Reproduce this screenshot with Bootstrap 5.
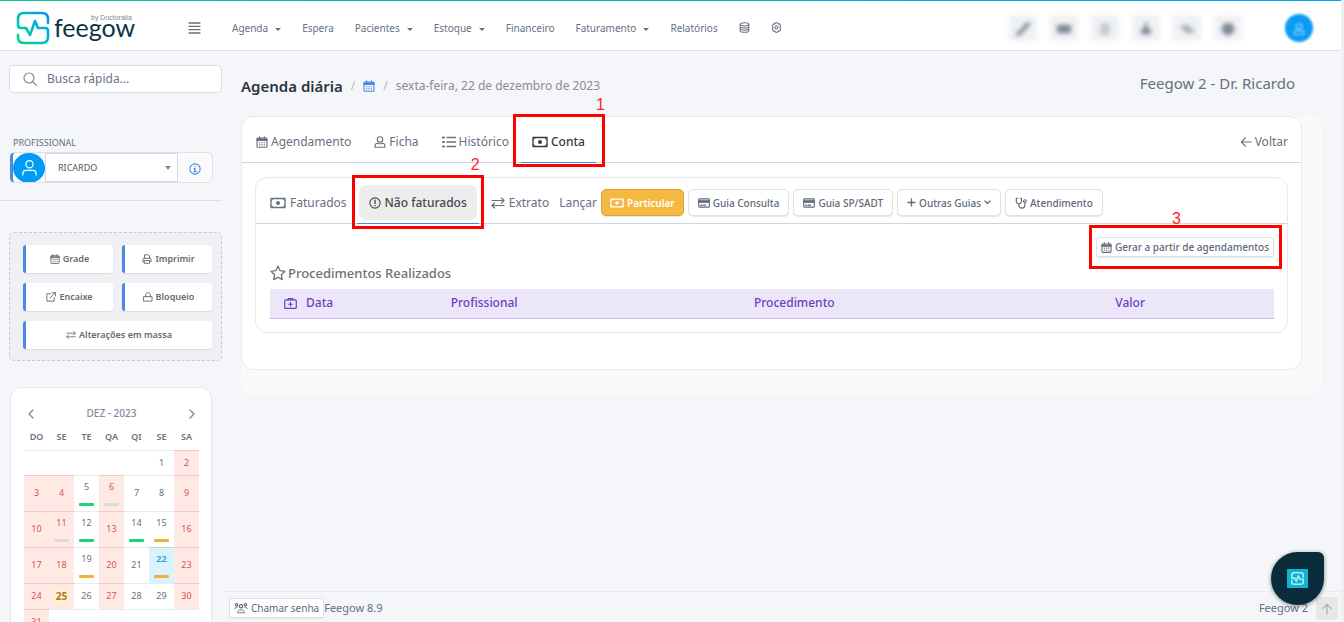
<!DOCTYPE html>
<html lang="pt-BR">
<head>
<meta charset="utf-8">
<meta name="viewport" content="width=device-width, initial-scale=1">
<title>Feegow - Agenda diária</title>
<link href="https://cdn.jsdelivr.net/npm/bootstrap@5.3.0/dist/css/bootstrap.min.css" rel="stylesheet">
<style>
:root{--ink:#66707f;--line:#e7e9ee;--blue:#4a89e8}
body{font-family:"Noto Sans","Liberation Sans",sans-serif;font-size:13px;line-height:20px;color:var(--ink);background:#f5f6f9;border-right:3px solid #f0f0f1}
a{color:inherit;text-decoration:none}
svg{flex:none;fill:none;stroke:currentColor;stroke-width:1.3;stroke-linecap:round;stroke-linejoin:round}
.ic{width:12px;height:12px}
.ic-sm{width:11px;height:11px}
.ic-md{width:14px;height:14px}
.ic-wide{width:16px;height:12px}
.shell{height:100vh;overflow:hidden}
.topbar{height:51px;background:#fff;border-bottom:1px solid #dde2ea;flex:none;position:relative;padding-top:5px}
.topbar::before{content:"";position:absolute;inset:0 0 auto;height:1px;background:linear-gradient(90deg,#00c4a0,#00a0f5)}
.logo{width:120px;height:34px;overflow:visible}
.logo text{stroke:none;fill:#0b3443}
.logo .by{fill:#7d8790}
.brand-zone{width:222px;padding:0 21px 0 16px}
.burger{border:0;background:none;padding:0;line-height:1;color:var(--ink)}
.mainmenu{font-size:10px;gap:21px;padding-left:10px}
.mainmenu .dropdown-toggle::after{margin-left:7px;vertical-align:1px;border-width:3px 3px 0}
.tools{gap:13px;padding-right:28px}
.tool{width:28px;height:26px;border:0;padding:0;background:#eff1f4;color:#7d8b95;filter:blur(2px)}
.tool svg{width:14px;height:14px;stroke-width:2.5}
.avatar-top{width:28px;height:28px;border:0;padding:0;background:#0a9cf5;color:#9ad6fc;filter:blur(1px);margin-left:30px}
.side{width:222px;flex:none;padding:14px 0 0 9px}
.search{height:28px;border:1px solid #d9dce1;border-radius:5px;background:#fff;padding:0 13px;gap:8px;color:#8c8c8c}
.search input{border:0;outline:0;min-width:0;background:none;font-size:12px;color:#66758a}
.search input::placeholder{color:#66758a}
.lbl{font-size:9px;line-height:14px;margin:43px 0 2px 4px}
.prof{height:31px;width:203px;margin-left:1px;border:1px solid #dfe1e5;border-left:3px solid var(--blue);border-radius:5px;background:#fafafa}
.prof .face{width:32px;height:30px;background:#009bf5;color:#fff;border-radius:50%}
.prof select{font-size:9px;color:#555;border:1px solid #d0d9ea;border-radius:0;height:29px;padding:0 20px 0 12px;background:#fff url("data:image/svg+xml,%3Csvg xmlns='http://www.w3.org/2000/svg' viewBox='0 0 6 5'%3E%3Cpath d='M0 1h6L3 5z' fill='%23888'/%3E%3C/svg%3E") no-repeat right 6px center/6px 5px;appearance:none;min-width:0}
.prof button{width:34px;border:0;background:none;color:var(--blue);padding:0}
.rule{margin:17px 0 31px -9px;border-top:1px solid #dddfe2}
.actions{border:1px dashed #c9cbce;border-radius:5px;background:#eef0f4;padding:12px 9px 11px 13px;display:grid;grid-template-columns:1fr 1fr;gap:10px 9px}
.act{height:28px;border:0;border-left:3px solid var(--blue);border-radius:3px;background:#fff;box-shadow:0 1px 1px #d8dade;font-size:9px;font-weight:600;color:#6a6a6a;gap:3px;padding:0}
.act svg{width:10px;height:10px}
.act-all{grid-column:1/-1}
.cal{width:202px;border:1px solid #e6e8ec;border-radius:11px;background:#fff;margin:26px 0 0 1px;padding:14px 12px 14px 13px}
.cal-h{height:22px;font-size:10px;color:#7d8ca3;padding:0 3px;font-weight:500}
.cal-h button{border:0;background:none;color:inherit;padding:0;line-height:1}
.cal table{width:175px;table-layout:fixed;font-size:9px;line-height:12px;text-align:center;border-collapse:collapse}
.cal th{height:26px;font-weight:600;font-size:9px;padding:0}
.cal td{padding:0;border-top:1px solid #e9ebee;vertical-align:middle}
.cal .h1r td{height:25px}.cal .h2r td{height:36px}.cal .h3r td{height:26px}
.cal .off{background:#ffe9e4;color:#d3544f;border-top-color:#f9c6c6}
.cal .now{background:#d8f2fe;color:#2b9cc6;border-top-color:#aee0b4}
.cal .now.has{font-weight:600}
.cal i{display:block;width:15px;height:3px;border-radius:1px;margin:10px auto 0}
.cal .has{vertical-align:bottom;padding-bottom:5px}
.g{background:#1bd474}.o{background:#efb03c}.n{background:#dbdbdb}
.xmas{display:inline-block;background:#fdf3cd;border-radius:50%;color:#a57b2e;font-weight:700;font-size:10px;line-height:15px;padding:0 3px}
.crumbs{font-size:12px;color:#8a8c90;gap:8px;padding-top:3px}
.crumbs h1{font-size:15px;line-height:20px;font-weight:600;color:#2c3440;margin:0}
.crumbs .sep{color:#b4b6ba}
.crumbs a{color:var(--blue)}
.head{padding:22px 46px 20px 19px}
.unit{font-size:15px;line-height:16px;padding-bottom:4px}
.backdrop-zone{margin:0 19px;padding:0 20px 24px 0;background:#fafafa;border-radius:12px}
.panel{background:#fff;border:1px solid var(--line);border-radius:12px}
.tabs{border-bottom:1px solid #ccd6e6}
.outer-tabs{height:46px;padding:0 13px 0 3px;gap:1px}
.tab{padding:0 11px;height:100%;gap:3px;position:relative}
.tab.sel{color:#333a45;font-weight:500;box-shadow:0 1px 0 var(--blue)}
.outer-tabs>a{font-size:12px;padding-top:4px;gap:3px}
.inner{margin:14px 13px 36px}
.inner-tabs{height:46px;padding:4px 14px 0 4px;font-size:12px}
.inner-tabs .tab{padding:0 10px;gap:4px}
.pill{background:#ededee;border-radius:7px;height:35px;padding:0 10px;gap:4px}
.inner-tabs .tab.sel{padding:0 2px;margin-right:2px;color:#444950}
.bt{height:27px;border:1px solid #dfe1e5;border-radius:5px;background:#fff;color:#5e6979;font-size:10px;font-weight:500;padding:0 9px;gap:3px;box-shadow:0 1px 1px #e6e6e8;white-space:nowrap;display:inline-flex;align-items:center}
.bt.warn{background:#f5b942;border-color:#dca338;color:#fff;font-weight:600;padding:0 8px}
.bt.warn svg{width:14px}
.bt.mini{height:20px;padding:0 4px;border-radius:3px}
.callout-box{position:absolute;border:3px solid #fe0000;z-index:2;pointer-events:none}
.callout-box span{position:absolute;color:#fe2525;font:16px/18px "Liberation Sans",sans-serif;bottom:100%}
.c1{inset:-3px -9px -5px -8px}.c1 span{right:-3px;padding-bottom:3px}
.c2{inset:-7px -5px -6px -5px}.c2 span{right:1px;padding-bottom:4px}
.c3{inset:-12px -8px -12px -7px}.c3 span{left:80px}
.inner-body{padding:13px 13px 13px 14px}
.sec{font-size:13px;line-height:20px;font-weight:500;color:#707070;gap:2px;margin:6px 0}
.proc{width:100%;table-layout:fixed;color:#6a3fc0;font-size:12px;margin:0}
.proc th{font-weight:500;height:29px;background:#ece7f8;border-bottom:1px solid #c5b8ea;padding:0 0 1px}
.proc th:first-child{padding-left:14px}
.proc svg{width:13px;height:13px;margin-right:9px}
.foot{height:31px;border-top:1px solid #eaebee;padding:2px 3px 0 7px;font-size:11px}
.foot .bt{height:20px;padding:0 4px;border-radius:2px;font-weight:400}
.up{width:22px;height:23px;border:0;background:#e7e7e8;color:#aaa;padding:0;border-radius:3px}
.drop{position:absolute;right:17px;bottom:17px;width:53px;height:53px;border:0;padding:0;background:#082c3a;border-radius:50% 6px 50% 50%;box-shadow:0 1px 4px #0007}
.drop span{width:21px;height:19px;background:#17b1d0;color:#a5f0f5}
.drop svg{width:15px;height:13px;stroke-width:4}
</style>
</head>
<body>
<svg width="0" height="0" class="position-absolute" aria-hidden="true">
<defs>
<linearGradient id="lg" x1="0" y1="1" x2="1" y2="0"><stop offset="0" stop-color="#05d67c"/><stop offset=".5" stop-color="#00bcc4"/><stop offset="1" stop-color="#0a90ff"/></linearGradient>
<symbol id="cal" viewBox="0 0 14 14"><rect x="1.200" y="2.500" width="11.600" height="10.700" rx="1"/><path d="M1.200 5.300h11.600M1.200 4h11.600M4.200 .8v3M9.800 .8v3"/><path d="M3.500 7.800h1.500M6.300 7.800h1.500M9.100 7.800h1.500M3.500 10.400h1.500M6.300 10.400h1.500M9.100 10.400h1.500" stroke-linecap="butt"/></symbol>
<symbol id="user" viewBox="0 0 14 14"><circle cx="7" cy="4" r="3.200"/><path d="M1.300 13.200v-1.500c0-2 1.200-3.200 3-3.200 1.200.8 4.200.8 5.400 0 1.800 0 3 1.200 3 3.200v1.500z"/></symbol>
<symbol id="person" viewBox="0 0 18 18"><circle cx="9" cy="5.500" r="3.800"/><path d="M2 17v-1.500c0-2 1.500-3.500 3.500-3.500h7c2 0 3.500 1.500 3.500 3.500V17"/></symbol>
<symbol id="list" viewBox="0 0 14 14"><path d="M5 2.500h8.500M5 7h8.500M5 11.500h8.500"/><path d="M1 2.500h1M1 7h1M1 11.500h1" stroke-width="2"/></symbol>
<symbol id="money" viewBox="0 0 16 12"><path d="M1 1.500h14v9H1z"/><circle cx="8" cy="6" r="2" fill="currentColor" stroke="none"/><path d="M1 3.500c1 0 2-1 2-2M15 3.500c-1 0-2-1-2-2M1 8.500c1 0 2 1 2 2M15 8.500c-1 0-2 1-2 2" stroke-width="1"/></symbol>
<symbol id="warn" viewBox="0 0 14 14"><circle cx="7" cy="7" r="6"/><path d="M7 3.800v3.700M7 9.900v.2" stroke-width="1.600"/></symbol>
<symbol id="info" viewBox="0 0 14 14"><circle cx="7" cy="7" r="6"/><path d="M7 4v.2M6 6.700h1v3.300M5.800 10h2.600" stroke-width="1.500"/></symbol>
<symbol id="swap" viewBox="0 0 14 12"><path d="M1 3.500h12M10.500 1L13 3.500 10.500 6M13 8.500H1M3.500 6L1 8.500 3.500 11" stroke-width="1.200"/></symbol>
<symbol id="card" viewBox="0 0 14 12"><rect x=".8" y="1.200" width="12.400" height="9.600" rx="1"/><path d="M1 3.400h12v1.800H1z" fill="currentColor"/><path d="M3 8.500h1.500M6 8.500h3"/></symbol>
<symbol id="steth" viewBox="0 0 14 14"><path d="M3 1.500H1.500V5c0 4 6 4 6 0V1.500H6M4.500 8v2c0 4 7 4 7 0V6.500"/><circle cx="11.500" cy="4.800" r="1.600"/></symbol>
<symbol id="star" viewBox="0 0 16 16"><path d="M8 1.200l2.100 4.500 4.900.6-3.600 3.400.9 4.900L8 12.200l-4.300 2.400.9-4.900L1 6.300l4.900-.6z"/></symbol>
<symbol id="kit" viewBox="0 0 14 12"><rect x=".8" y="2.200" width="12.400" height="9" rx="1"/><path d="M4.500 2V.8h5V2M7 4.800v4M5 6.800h4"/></symbol>
<symbol id="left" viewBox="0 0 14 14"><path d="M13 7H1.500M6.500 2l-5 5 5 5"/></symbol>
<symbol id="db" viewBox="0 0 14 14"><ellipse cx="7" cy="3" rx="5.500" ry="2"/><path d="M1.500 3v8c0 2.700 11 2.700 11 0V3M1.500 5.700c0 2.700 11 2.700 11 0M1.500 8.400c0 2.700 11 2.700 11 0"/></symbol>
<symbol id="gear" viewBox="0 0 14 14"><path d="M5.500 1h3l.5 1.700 1.800-.4 1.500 2.500L11.300 7l1 2.200-1.500 2.500-1.800-.4L8.500 13h-3L5 11.300l-1.800.4-1.500-2.500L2.700 7l-1-2.200 1.500-2.500L5 2.700z"/><circle cx="7" cy="7" r="1.900"/></symbol>
<symbol id="print" viewBox="0 0 14 14"><path d="M3.500 6V1.200h5.500l1.500 1.500V6M3 10.500H1.200V7.500c0-1 .5-1.500 1.500-1.500h8.600c1 0 1.500.5 1.500 1.500v3H11M3.500 9h7v4h-7z"/></symbol>
<symbol id="ext" viewBox="0 0 14 14"><path d="M6.500 2.500H1.200v10.300h10.300V8M8.500 1h4.700v4.700M13 1L5.500 8.500"/></symbol>
<symbol id="lock" viewBox="0 0 14 14"><path d="M1.300 6.500h11.400v6.300H1.300zM3.800 6.500V4c0-4 6.400-4 6.400 0v2.500"/></symbol>
<symbol id="users" viewBox="0 0 16 12"><circle cx="8" cy="4" r="1.900"/><circle cx="3" cy="2.200" r="1.300"/><circle cx="13" cy="2.200" r="1.300"/><path d="M4 11c0-4 8-4 8 0zM1 7c0-2 1.500-2.500 3-2M15 7c0-2-1.500-2.500-3-2" stroke-width="1"/></symbol>
<symbol id="pulse" viewBox="0 0 34 34"><path d="M32 13V8c0-4-2-6-6-6H8C4 2 2 4 2 8v8h8l4 8 5-14 4 9h9v7c0 4-2 6-6 6H8c-4 0-6-2-6-6v-4"/></symbol>
</defs></svg>

<div class="shell d-flex flex-column position-relative">
<header class="topbar d-flex align-items-center">
  <div class="brand-zone d-flex align-items-center justify-content-between">
    <a href="#" class="d-flex" aria-label="Feegow"><svg class="logo" viewBox="0 0 120 34"><path d="M32 12V8c0-4-2-6-6-6H8C4 2 2 4 2 8v6c0 2 1 3 3 3h5l4 7 5-14 3 7h7c2 0 3 1 3 3v6c0 4-2 6-6 6H8c-4 0-6-2-6-6v-2" stroke="url(#lg)" stroke-width="2.600"/><text x="38" y="26" font-family="Lato" font-size="25">feegow</text><text class="by" x="75" y="9" font-family="Liberation Sans" font-size="7">by Doctoralia</text></svg></a>
    <button class="burger" aria-label="Menu"><svg width="13" height="12" viewBox="0 0 13 12"><path d="M1 1h11M1 4.300h11M1 7.600h11M1 11h11" stroke-width="1.300"/></svg></button>
  </div>
  <nav class="mainmenu d-flex align-items-center flex-grow-1">
    <a href="#" class="dropdown-toggle">Agenda</a><a href="#">Espera</a><a href="#" class="dropdown-toggle">Pacientes</a><a href="#" class="dropdown-toggle">Estoque</a><a href="#">Financeiro</a><a href="#" class="dropdown-toggle">Faturamento</a><a href="#">Relatórios</a>
    <a href="#" class="d-flex" aria-label="Dados"><svg class="ic-sm"><use href="#db"/></svg></a><a href="#" class="d-flex" aria-label="Configurações"><svg class="ic-sm"><use href="#gear"/></svg></a>
  </nav>
  <div class="tools d-flex align-items-center">
    <button class="tool" aria-label="Telefone"><svg viewBox="0 0 14 14"><path d="M2 12l4-3 3-4 3-3" stroke-width="4"/></svg></button>
    <button class="tool" aria-label="Vídeo"><svg viewBox="0 0 14 14"><path d="M1 4h12v6H1z" fill="currentColor"/></svg></button>
    <button class="tool" aria-label="Lista"><svg viewBox="0 0 14 14"><path d="M3 3h8M3 7h8M3 11h8" stroke-width="1.500"/></svg></button>
    <button class="tool" aria-label="Avisos"><svg viewBox="0 0 14 14"><path d="M7 1v4M3 11c0-6 8-6 8 0z" fill="currentColor"/></svg></button>
    <button class="tool" aria-label="Mensagens"><svg viewBox="0 0 14 14"><path d="M2 5h7M5 9h8"/></svg></button>
    <button class="tool" aria-label="Ajuda"><svg viewBox="0 0 14 14"><circle cx="7" cy="7" r="5" fill="currentColor"/></svg></button>
    <button class="avatar-top rounded-circle" aria-label="Conta do usuário"><svg width="12" height="12"><use href="#user"/></svg></button>
  </div>
</header>

<div class="d-flex flex-grow-1 overflow-hidden">
<aside class="side">
  <label class="search d-flex align-items-center"><svg width="14" height="14" viewBox="0 0 14 14"><circle cx="6" cy="6" r="5" stroke-width="1.200"/><path d="M10 10l3.500 3.500" stroke-width="1.200"/></svg><input type="search" placeholder="Busca rápida..." aria-label="Busca rápida"></label>
  <label class="lbl d-block" for="prof">PROFISSIONAL</label>
  <div class="prof d-flex align-items-center overflow-hidden"><span class="face d-flex align-items-center justify-content-center"><svg width="17" height="17"><use href="#person"/></svg></span><select id="prof" class="flex-grow-1"><option>RICARDO</option></select><button aria-label="Informações"><svg width="12" height="12"><use href="#info"/></svg></button></div>
  <div class="rule"></div>
  <div class="actions">
    <button class="act d-flex align-items-center justify-content-center"><svg><use href="#cal"/></svg>Grade</button>
    <button class="act d-flex align-items-center justify-content-center"><svg><use href="#print"/></svg>Imprimir</button>
    <button class="act d-flex align-items-center justify-content-center"><svg><use href="#ext"/></svg>Encaixe</button>
    <button class="act d-flex align-items-center justify-content-center"><svg><use href="#lock"/></svg>Bloqueio</button>
    <button class="act act-all d-flex align-items-center justify-content-center"><svg><use href="#swap"/></svg>Alterações em massa</button>
  </div>
  <section class="cal">
    <div class="cal-h d-flex align-items-center justify-content-between"><button aria-label="Mês anterior"><svg width="8" height="10" viewBox="0 0 8 10"><path d="M6 1L2 5l4 4"/></svg></button><span>DEZ - 2023</span><button aria-label="Próximo mês"><svg width="8" height="10" viewBox="0 0 8 10"><path d="M2 1l4 4-4 4"/></svg></button></div>
    <table>
      <thead><tr><th>DO</th><th>SE</th><th>TE</th><th>QA</th><th>QI</th><th>SE</th><th>SA</th></tr></thead>
      <tbody>
      <tr class="h1r"><td></td><td></td><td></td><td></td><td></td><td>1</td><td class="off">2</td></tr>
      <tr class="h2r"><td class="off">3</td><td class="off">4</td><td class="has">5<i class="g"></i></td><td class="off has">6<i class="n"></i></td><td>7</td><td>8</td><td class="off">9</td></tr>
      <tr class="h2r"><td class="off">10</td><td class="off has">11<i class="n"></i></td><td class="has">12<i class="g"></i></td><td class="off">13</td><td class="has">14<i class="g"></i></td><td class="has">15<i class="o"></i></td><td class="off">16</td></tr>
      <tr class="h2r"><td class="off">17</td><td class="off">18</td><td class="has">19<i class="o"></i></td><td class="off">20</td><td>21</td><td class="now has">22<i class="o"></i></td><td class="off">23</td></tr>
      <tr class="h3r"><td class="off">24</td><td class="off"><span class="xmas">25</span></td><td>26</td><td class="off">27</td><td>28</td><td>29</td><td class="off">30</td></tr>
      <tr class="h3r"><td class="off">31</td><td></td><td></td><td></td><td></td><td></td><td></td></tr>
      </tbody>
    </table>
  </section>
</aside>

<div class="d-flex flex-column flex-grow-1 overflow-hidden">
<main class="flex-grow-1">
  <div class="head d-flex justify-content-between align-items-center">
    <div class="crumbs d-flex align-items-center"><h1>Agenda diária</h1><span class="sep">/</span><a href="#" class="d-flex" aria-label="Calendário"><svg class="ic"><use href="#cal"/></svg></a><span class="sep">/</span><span>sexta-feira, 22 de dezembro de 2023</span></div>
    <div class="unit">Feegow 2 - Dr. Ricardo</div>
  </div>
  <div class="backdrop-zone">
  <div class="panel">
    <nav class="tabs outer-tabs d-flex align-items-center">
      <a href="#" class="tab d-flex align-items-center"><svg class="ic"><use href="#cal"/></svg>Agendamento</a>
      <a href="#" class="tab d-flex align-items-center"><svg class="ic"><use href="#user"/></svg>Ficha</a>
      <a href="#" class="tab d-flex align-items-center"><svg class="ic-md"><use href="#list"/></svg>Histórico</a>
      <a href="#" class="tab sel d-flex align-items-center"><svg class="ic-wide"><use href="#money"/></svg>Conta<span class="callout-box c1"><span>1</span></span></a>
      <a href="#" class="ms-auto d-flex align-items-center"><svg class="ic"><use href="#left"/></svg>Voltar</a>
    </nav>
    <div class="panel inner">
      <div class="tabs inner-tabs d-flex align-items-center">
        <a href="#" class="tab d-flex align-items-center"><svg class="ic-wide"><use href="#money"/></svg>Faturados</a>
        <a href="#" class="tab sel d-flex align-items-center"><span class="pill d-flex align-items-center"><svg class="ic"><use href="#warn"/></svg>Não faturados</span><span class="callout-box c2"><span>2</span></span></a>
        <a href="#" class="tab d-flex align-items-center"><svg class="ic-md"><use href="#swap"/></svg>Extrato</a>
        <span class="me-1">Lançar</span>
        <div class="d-flex gap-1">
        <button class="bt warn"><svg class="ic-wide"><use href="#money"/></svg>Particular</button>
        <button class="bt"><svg class="ic"><use href="#card"/></svg>Guia Consulta</button>
        <button class="bt"><svg class="ic"><use href="#card"/></svg>Guia SP/SADT</button>
        <button class="bt"><svg width="9" height="9" viewBox="0 0 9 9"><path d="M4.500 1v7M1 4.500h7"/></svg>Outras Guias<svg width="7" height="5" viewBox="0 0 7 5"><path d="M1 1l2.500 2.500L6 1"/></svg></button>
        <button class="bt"><svg class="ic"><use href="#steth"/></svg>Atendimento</button>
        </div>
      </div>
      <div class="inner-body">
        <div class="d-flex justify-content-end"><div class="position-relative d-flex"><button class="bt mini"><svg class="ic-sm"><use href="#cal"/></svg>Gerar a partir de agendamentos</button><span class="callout-box c3"><span>3</span></span></div></div>
        <h2 class="sec d-flex align-items-center"><svg width="16" height="16"><use href="#star"/></svg>Procedimentos Realizados</h2>
        <table class="proc">
          <colgroup><col style="width:18%"><col style="width:30.200%"><col style="width:36%"><col></colgroup>
          <thead><tr><th><svg><use href="#kit"/></svg>Data</th><th>Profissional</th><th>Procedimento</th><th>Valor</th></tr></thead>
        </table>
      </div>
    </div>
  </div>
  </div>
</main>
<footer class="foot d-flex align-items-center"><button class="bt"><svg class="ic-md"><use href="#users"/></svg>Chamar senha</button><span>Feegow 8.9</span><span class="ms-auto me-2">Feegow 2</span><button class="up" aria-label="Voltar ao topo"><svg width="12" height="12" viewBox="0 0 14 14"><path d="M7 13V1.500M2 6.500l5-5 5 5"/></svg></button></footer>
</div>
</div>
<button class="drop d-flex align-items-center justify-content-center" aria-label="Ajuda Feegow"><span class="d-flex align-items-center justify-content-center"><svg><use href="#pulse"/></svg></span></button>
</div>
<script src="https://cdn.jsdelivr.net/npm/bootstrap@5.3.0/dist/js/bootstrap.bundle.min.js"></script>
</body>
</html>
